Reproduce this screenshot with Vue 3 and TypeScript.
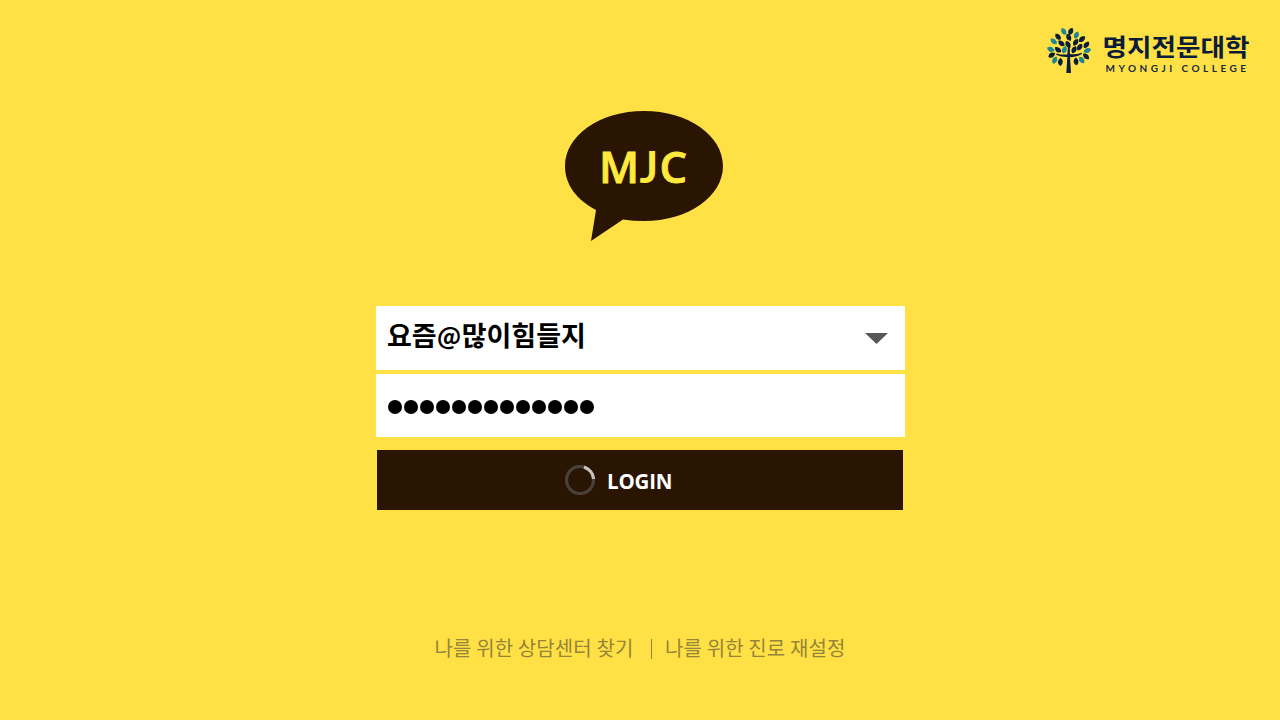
<script setup lang="ts">
import { ref } from 'vue'

interface Leaf {
  x: number
  y: number
  angle: number
  teal?: boolean
}

const accountName = ref('요즘')
const accountHost = ref('많이힘들지')
const secretLength = 13

const leaves: Leaf[] = [
  { x: 71, y: 33, angle: -30, teal: true },
  { x: 92, y: 33, angle: 25 },
  { x: 54, y: 49, angle: -40 },
  { x: 86, y: 51, angle: -25 },
  { x: 109, y: 44, angle: 25, teal: true },
  { x: 126, y: 56, angle: 50 },
  { x: 41, y: 63, angle: -50, teal: true },
  { x: 64, y: 69, angle: -50 },
  { x: 107, y: 66, angle: 35 },
  { x: 84, y: 72, angle: -30 },
  { x: 119, y: 80, angle: 35 },
  { x: 139, y: 73, angle: 40 },
  { x: 32, y: 87, angle: -65, teal: true },
  { x: 54, y: 88, angle: -50 },
  { x: 73, y: 88, angle: 20, teal: true },
  { x: 102, y: 88, angle: 30 },
  { x: 142, y: 90, angle: 70, teal: true },
  { x: 35, y: 104, angle: 60 },
  { x: 138, y: 108, angle: -45 },
  { x: 44, y: 119, angle: 25, teal: true },
  { x: 61, y: 125, angle: 5 },
  { x: 108, y: 123, angle: -5 },
  { x: 125, y: 119, angle: -35, teal: true },
]
</script>

<template>
  <main class="page">
    <header class="header">
      <svg class="brand" width="220" height="60" viewBox="0 0 220 60" role="img" aria-label="명지전문대학">
        <g transform="translate(0 0.4) scale(0.33333)">
          <path
            v-for="(leaf, i) in leaves"
            :key="i"
            :class="leaf.teal ? 'leaf-teal' : 'leaf-navy'"
            d="M0-12 C10-5 9 5 1 12 C-10 6-9-5 0-12Z"
            :transform="`translate(${leaf.x} ${leaf.y}) rotate(${leaf.angle})`"
          />
          <path class="leaf-navy" d="M84 75 L89 75 L90 101 Q107 104 125 97 L126 101 Q108 112 90 110 L93 158 L79 158 L82 110 Q66 111 48 103 L50 99 Q66 104 82 102Z" />
        </g>
        <g transform="translate(62.5 35.700) scale(1 0.9)">
          <text class="brand-ko" x="0" y="0" textLength="147" lengthAdjust="spacingAndGlyphs">명지전문대학</text>
        </g>
        <text class="brand-en" x="65.500" y="52.300" textLength="140.500">MYONGJI COLLEGE</text>
      </svg>
    </header>

    <svg class="bubble" width="160" height="132" viewBox="0 0 160 132">
      <path d="M80 1 C124 1 159 25.500 159 56 C159 86.500 124 111 80 111 Q69 111 59 109.500 L27 131 L32 100 C13 90 1 75 1 56 C1 25.500 36 1 80 1Z" />
      <text y="72.500"><tspan x="35">M</tspan><tspan class="letter-j" x="75.500">J</tspan><tspan x="95.500">C</tspan></text>
    </svg>

    <form class="form" @submit.prevent>
      <div class="field">
        <span class="account">{{ accountName }}<span class="at">@</span>{{ accountHost }}</span>
        <svg class="arrow" width="23" height="11" viewBox="0 0 23 11"><path d="M0 0H23L11.500 11Z" /></svg>
      </div>
      <div class="field password">
        <i v-for="n in secretLength" :key="n" class="dot"></i>
      </div>
      <button class="login" type="submit">
        <svg class="spinner" width="30" height="30" viewBox="0 0 30 30">
          <circle cx="15" cy="15" r="13.500" />
          <path d="M19 2.100 A13.500 13.500 0 0 1 28.500 14" />
        </svg>
        <span class="login-label">LOGIN</span>
      </button>
    </form>

    <nav class="links">
      <a class="find">나를 위한 상담센터 찾기</a>
      <span class="divider"></span>
      <a class="reset">나를 위한 진로 재설정</a>
    </nav>
  </main>
</template>

<style>
body {
  margin: 0;
  background: #ffe146;
}
</style>

<style scoped>
.page {
  box-sizing: border-box;
  width: 1280px;
  height: 720px;
  overflow: hidden;
  background: #ffe146;
  display: flex;
  flex-direction: column;
  font-family: "Noto Sans CJK KR", sans-serif;
}
.header {
  height: 60px;
  padding: 20px 20px 0 0;
  display: flex;
  justify-content: flex-end;
}
.leaf-navy { fill: #0b1c38; }
.leaf-teal { fill: #1e8793; }
.brand-ko {
  font-size: 26px;
  font-weight: 700;
  fill: #0b1c38;
}
.brand-en {
  font-family: Lato, sans-serif;
  font-size: 10px;
  font-weight: 700;
  fill: #182945;
}
.bubble {
  margin: 30px 0 0 564px;
  flex-shrink: 0;
  fill: #2a1503;
}
.bubble text {
  font-family: "Open Sans", sans-serif;
  font-size: 43.5px;
  font-weight: 600;
  fill: #ffea3d;
  stroke: #ffea3d;
  stroke-width: 0.8;
}
.bubble .letter-j {
  font-family: Lato, sans-serif;
  font-weight: 700;
  stroke-width: 0;
}
.form {
  width: 529px;
  margin: 64px 0 0 376px;
  display: flex;
  flex-direction: column;
}
.field {
  box-sizing: border-box;
  height: 64px;
  padding: 0 17px 0 11px;
  background: #fff;
  display: flex;
  align-items: center;
  justify-content: space-between;
}
.account {
  font-size: 27px;
  line-height: 40px;
  font-weight: 700;
  padding-bottom: 6px;
  color: #000;
  white-space: nowrap;
}
.at {
  display: inline-block;
  width: 25px;
  font-size: 24px;
  line-height: 24px;
  text-align: center;
  position: relative;
  top: -1px;
}
.arrow {
  margin-top: 1px;
  fill: #595757;
}
.password {
  height: 63px;
  margin-top: 4px;
  padding: 2px 0 0 12px;
  justify-content: flex-start;
  gap: 2px;
}
.dot {
  width: 14px;
  height: 14px;
  border-radius: 50%;
  background: #000;
}
.login {
  width: 526px;
  height: 60px;
  margin: 13px 0 0 1px;
  padding: 0 0 0 188px;
  border: 0;
  background: #2a1503;
  display: flex;
  align-items: center;
  gap: 12px;
}
.spinner {
  fill: none;
  stroke: #4a403b;
  stroke-width: 3.2;
}
.spinner path { stroke: #c8c3c0; }
.login-label {
  font-family: "Open Sans", sans-serif;
  font-size: 20.5px;
  letter-spacing: -0.2px;
  line-height: 30px;
  font-weight: 700;
  padding-top: 2px;
  color: #fff;
}
.links {
  margin: 123px 0 0 434px;
  height: 30px;
  display: flex;
  align-items: center;
  font-size: 20px;
  line-height: 30px;
  letter-spacing: 0.12px;
  color: #968438;
  white-space: nowrap;
}
.find {
  box-sizing: border-box;
  width: 217px;
  padding-left: 0.5px;
}
.divider {
  width: 1px;
  height: 20px;
  margin: 2px 13px 0 0;
  background: #968438;
}
</style>
